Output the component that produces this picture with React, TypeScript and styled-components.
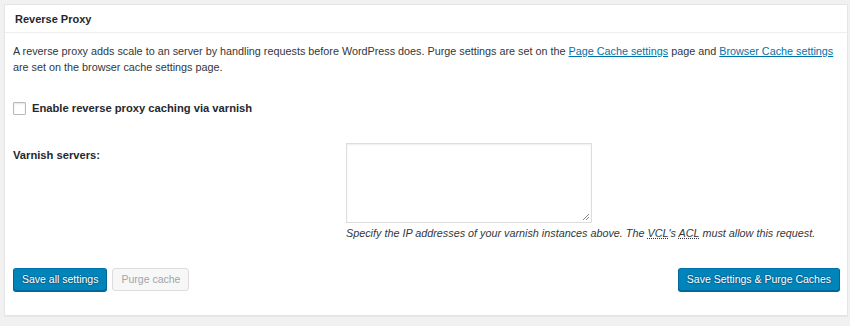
import React from "react";
import styled, { createGlobalStyle } from "styled-components";

const Global = createGlobalStyle`
  html, body { margin: 0; padding: 0; background: #f1f1f1; }
  body { font-family: "Liberation Sans", Arial, sans-serif; font-size: 10.8px; color: #23282d; }
  * { box-sizing: border-box; }
`;

const Page = styled.div`
  padding: 4px 2px 10px 4px;
`;

const Postbox = styled.div`
  background: #fff;
  border: 1px solid #e5e5e5;
  box-shadow: 0 1px 1px rgba(0, 0, 0, 0.04);
`;

const Header = styled.h3`
  margin: 0;
  padding: 0 10px;
  height: 28px;
  display: flex;
  align-items: center;
  font-size: 11px;
  font-weight: 700;
  color: #23282d;
  border-bottom: 1px solid #eee;
`;

const Inside = styled.div`
  padding: 10px 7px 24px 8px;
`;

const Para = styled.p`
  margin: 0;
  line-height: 16px;
  font-size: 10.8px;
  color: #32373c;
`;

const Link = styled.a`
  color: #0073aa;
  text-decoration: underline;
`;

const CheckRow = styled.label`
  display: flex;
  align-items: center;
  gap: 6px;
  margin-top: 26px;
  height: 14px;
  font-weight: 700;
  font-size: 11.2px;
  color: #23282d;
`;

const Checkbox = styled.span`
  width: 13px;
  height: 13px;
  border: 1px solid #b4b9be;
  border-radius: 1px;
  background: #fff;
  box-shadow: inset 0 1px 2px rgba(0, 0, 0, 0.1);
`;

const FormRow = styled.div`
  display: grid;
  grid-template-columns: 333px 1fr;
  margin-top: 28px;
`;

const Label = styled.div`
  font-weight: 700;
  font-size: 11.2px;
  color: #23282d;
  line-height: 14px;
  padding-top: 5px;
`;

const FieldCol = styled.div`
  display: flex;
  flex-direction: column;
`;

const TextArea = styled.div`
  position: relative;
  width: 246px;
  height: 80px;
  border: 1px solid #ddd;
  box-shadow: inset 0 1px 2px rgba(0, 0, 0, 0.07);
  background: #fff;
`;

const Grip = styled.svg`
  position: absolute;
  right: 1px;
  bottom: 1px;
`;

const Description = styled.p`
  margin: 3px 0 0;
  font-style: italic;
  font-size: 10.8px;
  color: #32373c;
  line-height: 14px;
  white-space: nowrap;
`;

const Abbr = styled.abbr`
  text-decoration: underline dotted;
`;

const ButtonBar = styled.div`
  display: flex;
  align-items: center;
  gap: 5px;
  margin-top: 28px;
`;

const Spacer = styled.div`
  flex: 1;
`;

const Button = styled.button<{ $primary?: boolean }>`
  height: 23px;
  padding: 0 8px;
  font-family: inherit;
  font-size: 10.5px;
  line-height: 21px;
  border-radius: 3px;
  border: 1px solid;
  ${({ $primary }) =>
    $primary
      ? `
    background: #0085ba;
    border-color: #0073aa #006799 #006799;
    box-shadow: 0 1px 0 #006799;
    color: #fff;
    text-shadow: 0 -1px 1px #006799, 1px 0 1px #006799, 0 1px 1px #006799, -1px 0 1px #006799;
  `
      : `
    background: #f7f7f7;
    border-color: #ddd;
    color: #a0a5aa;
  `}
`;

export default function App() {
  return (
    <>
      <Global />
      <Page>
        <Postbox>
          <Header>Reverse Proxy</Header>
          <Inside>
            <Para>
              A reverse proxy adds scale to an server by handling requests before WordPress does. Purge settings are set on
              the <Link href="#">Page Cache settings</Link> page and <Link href="#">Browser Cache settings</Link> are set on
              the browser cache settings page.
            </Para>
            <CheckRow>
              <Checkbox />
              Enable reverse proxy caching via varnish
            </CheckRow>
            <FormRow>
              <Label>Varnish servers:</Label>
              <FieldCol>
                <TextArea>
                  <Grip width="8" height="8" viewBox="0 0 8 8">
                    <path d="M7 1 L1 7 M7 4 L4 7" stroke="#888" strokeWidth="1" />
                  </Grip>
                </TextArea>
                <Description>
                  Specify the IP addresses of your varnish instances above. The <Abbr title="Varnish Configuration Language">VCL</Abbr>'s{" "}
                  <Abbr title="Access Control List">ACL</Abbr> must allow this request.
                </Description>
              </FieldCol>
            </FormRow>
            <ButtonBar>
              <Button $primary>Save all settings</Button>
              <Button disabled>Purge cache</Button>
              <Spacer />
              <Button $primary>Save Settings &amp; Purge Caches</Button>
            </ButtonBar>
          </Inside>
        </Postbox>
      </Page>
    </>
  );
}
